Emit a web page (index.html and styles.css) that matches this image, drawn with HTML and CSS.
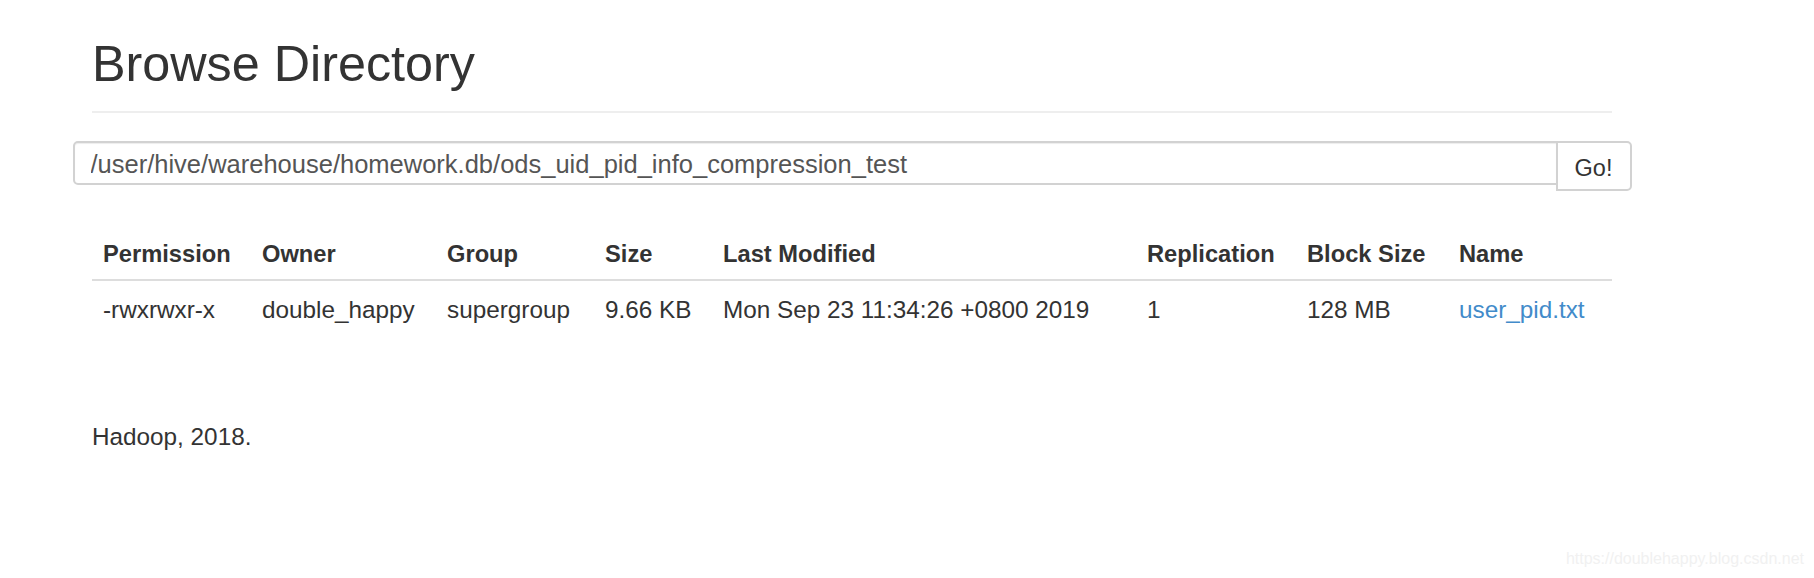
FILE: index.html
```html
<!DOCTYPE html>
<html lang="en">
<head>
<meta charset="utf-8">
<title>Browsing HDFS</title>
<link rel="stylesheet" href="styles.css">
</head>
<body>
<div class="container">
  <div class="page-header">
    <h1>Browse Directory</h1>
  </div>
  <form class="path-form">
    <input class="path-input" type="text" value="/user/hive/warehouse/homework.db/ods_uid_pid_info_compression_test">
    <button class="go-btn" type="button">Go!</button>
  </form>
  <table class="listing">
    <colgroup>
      <col class="c-perm"><col class="c-owner"><col class="c-group"><col class="c-size"><col class="c-mod"><col class="c-rep"><col class="c-block"><col class="c-name">
    </colgroup>
    <thead>
      <tr>
        <th>Permission</th><th>Owner</th><th>Group</th><th>Size</th><th>Last Modified</th><th>Replication</th><th>Block Size</th><th>Name</th>
      </tr>
    </thead>
    <tbody>
      <tr>
        <td>-rwxrwxr-x</td><td>double_happy</td><td>supergroup</td><td>9.66 KB</td><td>Mon Sep 23 11:34:26 +0800 2019</td><td>1</td><td>128 MB</td><td><a class="file-link" href="#">user_pid.txt</a></td>
      </tr>
    </tbody>
  </table>
  <p class="footer">Hadoop, 2018.</p>
</div>
<div class="watermark">https://doublehappy.blog.csdn.net</div>
</body>
</html>
```
FILE: styles.css
```css
html, body {
  margin: 0;
  padding: 0;
  background: #fff;
}
body {
  font-family: "Liberation Sans", Arial, Helvetica, sans-serif;
  color: #333;
  font-size: 24.3px;
  line-height: 26px;
  position: relative;
  height: 578px;
  overflow: hidden;
}
.container {
  margin-left: 92px;
  width: 1520px;
}
.page-header {
  padding-top: 36px;
  padding-bottom: 20px;
  border-bottom: 2px solid #eee;
}
.page-header h1 {
  margin: 0;
  font-size: 50.3px;
  line-height: 55px;
  font-weight: 400;
  color: #333;
}
.path-form {
  display: flex;
  align-items: flex-start;
  margin: 28px -19.5px 0 -19.5px;
}
.path-input {
  flex: 1;
  height: 44px;
  box-sizing: border-box;
  border: 2px solid #d2d2d2;
  border-radius: 5px 0 0 5px;
  padding: 2px 16px 0 16px;
  font-family: "Liberation Sans", Arial, sans-serif;
  font-size: 25.5px;
  color: #555;
  background: #fff;
  box-shadow: inset 0 1px 1px rgba(0,0,0,.075);
  outline: none;
}
.go-btn {
  width: 76px;
  height: 50px;
  box-sizing: border-box;
  margin-left: -2px;
  border: 2px solid #d2d2d2;
  border-radius: 0 5px 5px 0;
  background: #fff;
  color: #333;
  font-family: "Liberation Sans", Arial, sans-serif;
  font-size: 23.5px;
  padding: 4px 0 0 0;
}
.listing {
  margin-top: 40px;
  width: 1520px;
  table-layout: fixed;
  border-collapse: collapse;
  border-spacing: 0;
}
.c-perm { width: 159px; }
.c-owner { width: 185px; }
.c-group { width: 158px; }
.c-size { width: 118px; }
.c-mod { width: 424px; }
.c-rep { width: 160px; }
.c-block { width: 152px; }
.c-name { width: 164px; }
.listing th {
  text-align: left;
  font-weight: 700;
  font-size: 23.7px;
  line-height: 26px;
  padding: 10px 11px 12px 11px;
  border-bottom: 2px solid #ddd;
  white-space: nowrap;
}
.listing td {
  font-size: 24.3px;
  line-height: 26px;
  padding: 16px 11px 9px 11px;
  white-space: nowrap;
}
.file-link {
  color: #428bca;
  text-decoration: none;
}
.footer {
  margin: 92px 0 0 0;
  font-size: 24.3px;
  line-height: 26px;
}
.watermark {
  position: absolute;
  top: 551px;
  right: 10px;
  font-size: 16px;
  line-height: 16px;
  color: #f1f1f1;
  font-family: "Liberation Sans", Arial, sans-serif;
}
```
